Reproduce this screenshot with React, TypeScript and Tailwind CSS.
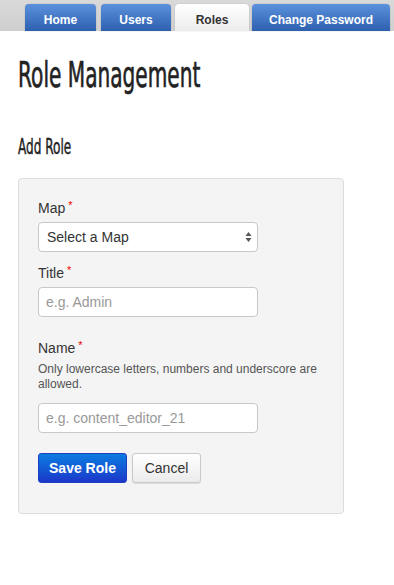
import React from "react";

export default function App() {
  const tabs = [
    { label: "Home", cls: "w-[71px]", active: false },
    { label: "Users", cls: "w-[70px] ml-[5px]", active: false },
    { label: "Roles", cls: "w-[74px] ml-[4px]", active: true },
    { label: "Change Password", cls: "w-[138px] ml-[3px]", active: false },
  ];
  return (
    <div className="min-h-[585px] w-[394px] bg-white font-['Liberation_Sans',Arial,sans-serif] text-[#333]">
      <div className="flex h-[31px] items-end bg-gradient-to-b from-[#d9d9d9] to-[#cfcfcf] pl-[25px]">
        <div className="flex h-[27px]">
          {tabs.map((t) => (
            <div
              key={t.label}
              className={
                t.active
                  ? `${t.cls} flex items-center justify-center rounded-t-[4px] bg-gradient-to-b from-[#ffffff] to-[#ececec] pt-[4px] text-[12px] font-bold text-[#333] shadow-[0_0_1px_rgba(0,0,0,0.35)]`
                  : `${t.cls} flex items-center justify-center rounded-t-[4px] bg-gradient-to-b from-[#5b91dc] to-[#2e60b0] pt-[4px] text-[12px] font-bold text-white shadow-[0_0_1px_rgba(0,0,0,0.4)]`
              }
            >
              {t.label}
            </div>
          ))}
        </div>
      </div>

      <div className="px-[18px]">
        <div className="mt-[27px] h-[34px] overflow-visible">
          <h1 className="inline-block origin-left scale-x-[0.575] whitespace-nowrap font-['DejaVu_Sans',sans-serif] text-[35px] leading-[34px] text-[#222] [-webkit-text-stroke:0.7px_#222]">
            Role Management
          </h1>
        </div>
        <div className="mt-[45px] h-[20px]">
          <h2 className="inline-block origin-left scale-x-[0.575] whitespace-nowrap font-['DejaVu_Sans',sans-serif] text-[21px] leading-[20px] text-[#222] [-webkit-text-stroke:0.5px_#222]">
            Add Role
          </h2>
        </div>

        <div className="mt-[21px] w-[326px] rounded-[4px] border border-[#dcdcdc] bg-[#f4f4f4] px-[19px] pb-[30px] pt-[20px]">
          <div className="flex items-start text-[14px] leading-[18px]">
            Map<span className="ml-[3px] text-[11px] leading-[12px] text-[#e00]">*</span>
          </div>
          <div className="mt-[5px] flex h-[30px] w-[220px] items-center justify-between rounded-[4px] border border-[#c8c8c8] bg-white pl-[8px] pr-[5px] text-[14px] text-[#333]">
            <span>Select a Map</span>
            <svg width="7" height="12" viewBox="0 0 7 12">
              <path d="M3.5 1 L6.5 5 L0.5 5 Z" fill="#555" />
              <path d="M3.5 11 L6.5 7 L0.5 7 Z" fill="#555" />
            </svg>
          </div>

          <div className="mt-[12px] flex items-start text-[14px] leading-[18px]">
            Title<span className="ml-[3px] text-[11px] leading-[12px] text-[#e00]">*</span>
          </div>
          <div className="mt-[5px] flex h-[30px] w-[220px] items-center rounded-[4px] border border-[#c8c8c8] bg-white pl-[7px] text-[14px] text-[#999]">
            e.g. Admin
          </div>

          <div className="mt-[22px] flex items-start text-[14px] leading-[18px]">
            Name<span className="ml-[3px] text-[11px] leading-[12px] text-[#e00]">*</span>
          </div>
          <p className="mt-[5px] text-[12px] leading-[15px] text-[#555]">
            Only lowercase letters, numbers and underscore are allowed.
          </p>
          <div className="mt-[11px] flex h-[30px] w-[220px] items-center rounded-[4px] border border-[#c8c8c8] bg-white pl-[7px] text-[14px] text-[#999]">
            e.g. content_editor_21
          </div>

          <div className="mt-[20px] flex gap-[5px]">
            <div className="flex h-[30px] w-[89px] items-center justify-center rounded-[3px] border border-[#1c3fc4] bg-gradient-to-b from-[#0d7be0] to-[#1c36c9] text-[14px] font-bold text-white">
              Save Role
            </div>
            <div className="flex h-[30px] w-[69px] items-center justify-center rounded-[3px] border border-[#c9c9c9] bg-gradient-to-b from-white to-[#ebebeb] text-[14px] text-[#333] shadow-[0_1px_1px_rgba(0,0,0,0.1)]">
              Cancel
            </div>
          </div>
        </div>
      </div>
    </div>
  );
}
